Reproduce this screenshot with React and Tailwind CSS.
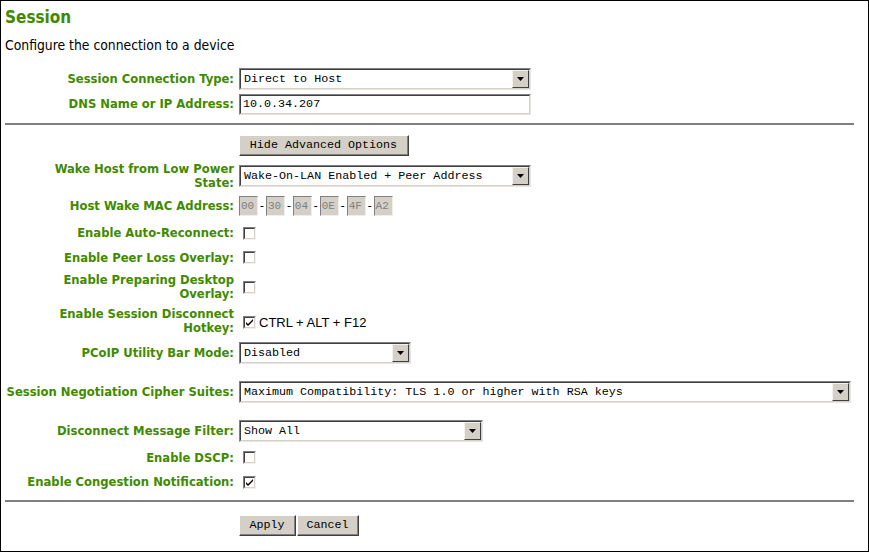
import React from "react";

const LABEL_FONT = { fontFamily: '"DejaVu Sans Condensed", "DejaVu Sans", Tahoma, sans-serif' };
const MONO = { fontFamily: '"Liberation Mono", "Courier New", monospace' };

function Label({ children }) {
  return (
    <div
      className="w-[234px] shrink-0 pr-[1px] text-right text-[12.9px] leading-[14px] font-bold text-[#3f8a00]"
      style={LABEL_FONT}
    >
      {children}
    </div>
  );
}

function Row({ h, label, children, className = "" }) {
  return (
    <div className={`flex items-center ${className}`} style={{ height: h }}>
      <Label>{label}</Label>
      <div className="ml-[4px] flex items-center">{children}</div>
    </div>
  );
}

function Inset({ w, h = 22, children, bg = "bg-white" }) {
  return (
    <div
      className="border border-t-[#808080] border-l-[#808080] border-r-[#e8e6e0] border-b-[#e8e6e0]"
      style={{ width: w, height: h }}
    >
      <div className={`h-full w-full border border-t-[#404040] border-l-[#404040] border-r-[#d4d0c8] border-b-[#d4d0c8] ${bg} flex items-center`}>
        {children}
      </div>
    </div>
  );
}

function Select({ w, value }) {
  return (
    <Inset w={w}>
      <div className="flex-1 pl-[3px] pt-[2px] text-[11.7px] text-black whitespace-nowrap overflow-hidden" style={MONO}>
        {value}
      </div>
      <div className="h-full w-[17px] p-0 flex items-center justify-center bg-[#d4d0c8] border border-t-[#f4f2ee] border-l-[#f4f2ee] border-r-[#404040] border-b-[#404040]">
        <svg width="7" height="4" viewBox="0 0 7 4">
          <polygon points="0,0 7,0 3.5,4" fill="#000" />
        </svg>
      </div>
    </Inset>
  );
}

function Checkbox({ checked }) {
  return (
    <div className="ml-[4px] w-[13px] h-[13px] border border-t-[#808080] border-l-[#808080] border-r-[#f4f2ee] border-b-[#f4f2ee]">
      <div className="w-full h-full bg-white border border-t-[#404040] border-l-[#404040] border-r-[#d4d0c8] border-b-[#d4d0c8] flex items-center justify-center">
        {checked && (
          <svg width="7" height="7" viewBox="0 0 7 7">
            <path d="M0 3 L2 5 L7 0 L7 2 L2 7 L0 5 Z" fill="#000" />
          </svg>
        )}
      </div>
    </div>
  );
}

function Button({ children, w }) {
  return (
    <div
      className="h-[21px] flex items-center justify-center bg-[#d4d0c8] border border-t-white border-l-white border-r-[#404040] border-b-[#404040] text-[11.7px] text-black"
      style={{ ...MONO, width: w }}
    >
      <div className="w-full h-full pt-[2px] flex items-center justify-center border-r border-b border-r-[#808080] border-b-[#808080]">
        {children}
      </div>
    </div>
  );
}

function MacBox({ v }) {
  return (
    <div className="w-[19px] h-[20px] bg-[#d4d0c8] border border-t-[#808080] border-l-[#808080] border-r-[#f0eee8] border-b-[#f0eee8] flex items-center pl-[1px] pt-[1px] text-[11px] text-[#808080]" style={MONO}>
      {v}
    </div>
  );
}

export default function App() {
  const mac = ["00", "30", "04", "0E", "4F", "A2"];
  return (
    <div className="w-[869px] h-[552px] border border-black bg-white overflow-hidden">
      <div className="pl-[4px] pt-[6px] h-[31px] text-[17px] leading-[20px] font-bold text-[#3f8a00]" style={LABEL_FONT}>
        Session
      </div>
      <div className="pl-[4px] h-[27px] flex items-center text-[13.8px] text-black" style={LABEL_FONT}>
        <span className="font-normal">Configure the connection to a device</span>
      </div>
      <div className="h-[7px]" />
      <Row h={25} label="Session Connection Type:">
        <Select w={292} value="Direct to Host" />
      </Row>
      <Row h={26} label="DNS Name or IP Address:">
        <Inset w={292} h={21}>
          <div className="pl-[2px] pt-[1px] text-[11.7px] text-black" style={MONO}>10.0.34.207</div>
        </Inset>
      </Row>
      <div className="h-[13px] flex items-center pl-[4px] pr-[14px]">
        <div className="w-full border-t-2 border-[#7f7f7f]" />
      </div>
      <Row h={30} label="">
        <Button w={170}>Hide Advanced Options</Button>
      </Row>
      <Row h={31} label={<>Wake Host from Low Power<br />State:</>}>
        <Select w={292} value="Wake-On-LAN Enabled + Peer Address" />
      </Row>
      <Row h={30} label="Host Wake MAC Address:">
        <div className="flex items-center">
          {mac.map((m, i) => (
            <React.Fragment key={m}>
              {i > 0 && <span className="px-[2px] text-[12px] text-black" style={LABEL_FONT}>-</span>}
              <MacBox v={m} />
            </React.Fragment>
          ))}
        </div>
      </Row>
      <Row h={24} label="Enable Auto-Reconnect:">
        <Checkbox />
      </Row>
      <Row h={25} label="Enable Peer Loss Overlay:">
        <Checkbox />
      </Row>
      <Row h={34} label={<>Enable Preparing Desktop<br />Overlay:</>}>
        <Checkbox />
      </Row>
      <Row h={34} label={<>Enable Session Disconnect<br />Hotkey:</>}>
        <div className="mt-[3px] flex items-center">
          <Checkbox checked />
          <span className="ml-[3px] text-[13px] text-black" style={{ fontFamily: '"Liberation Sans", Arial, sans-serif' }}>
            CTRL + ALT + F12
          </span>
        </div>
      </Row>
      <Row h={30} label="PCoIP Utility Bar Mode:">
        <Select w={172} value="Disabled" />
      </Row>
      <div className="h-[8px]" />
      <Row h={31} label="Session Negotiation Cipher Suites:">
        <Select w={612} value="Maximum Compatibility: TLS 1.0 or higher with RSA keys" />
      </Row>
      <div className="h-[8px]" />
      <Row h={31} label="Disconnect Message Filter:">
        <Select w={244} value="Show All" />
      </Row>
      <Row h={23} label="Enable DSCP:">
        <Checkbox />
      </Row>
      <Row h={26} label="Enable Congestion Notification:">
        <Checkbox checked />
      </Row>
      <div className="h-[12px] flex items-center pl-[4px] pr-[14px]">
        <div className="w-full border-t-2 border-[#7f7f7f]" />
      </div>
      <Row h={36} label="">
        <div className="flex gap-[1px]">
          <Button w={57}>Apply</Button>
          <Button w={62}>Cancel</Button>
        </div>
      </Row>
    </div>
  );
}
